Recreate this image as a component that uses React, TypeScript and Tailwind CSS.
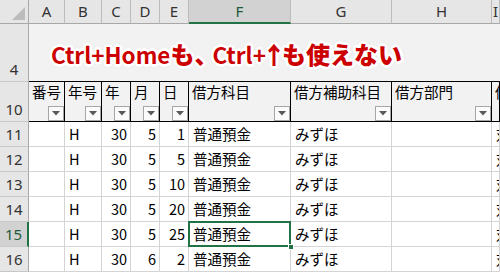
import React from "react";

const font = "font-['Noto_Sans_CJK_JP','Noto_Sans',sans-serif]";

function Dropdown() {
  return (
    <div className="self-end w-[16px] h-[15px] border border-[#a6a6a6] bg-[#fbfbfb] flex items-center justify-center">
      <svg width="8" height="5" viewBox="0 0 8 5">
        <path d="M0 0 L8 0 L4 4.5 Z" fill="#595959" />
      </svg>
    </div>
  );
}

const colLetters = ["A", "B", "C", "D", "E", "F", "G", "H", "I"];
const headers = ["番号", "年号", "年", "月", "日", "借方科目", "借方補助科目", "借方部門", "借方税区分"];
const rows: { n: number; d: string[] }[] = [
  { n: 11, d: ["", "H", "30", "5", "1", "普通預金", "みずほ", "", "対象外"] },
  { n: 12, d: ["", "H", "30", "5", "5", "普通預金", "みずほ", "", "対象外"] },
  { n: 13, d: ["", "H", "30", "5", "10", "普通預金", "みずほ", "", "対象外"] },
  { n: 14, d: ["", "H", "30", "5", "20", "普通預金", "みずほ", "", "対象外"] },
  { n: 15, d: ["", "H", "30", "5", "25", "普通預金", "みずほ", "", "対象外"] },
  { n: 16, d: ["", "H", "30", "6", "2", "普通預金", "みずほ", "", "対象外"] },
];
const rightAligned = [false, false, true, true, true, false, false, false, false];

export default function App() {
  return (
    <div className={`w-[500px] h-[273px] overflow-hidden bg-white text-black ${font}`}>
      <div className="grid grid-cols-[29px_36px_37px_29px_29px_29px_102px_101px_100px_1fr] grid-rows-[24px_58px_40px_25px_25px_25px_25px_25px_25px]">
        {/* corner */}
        <div className="bg-[#e6e6e6] border-r border-b border-[#a8a8a8] flex items-end justify-end p-[3px]">
          <svg width="13" height="13" viewBox="0 0 13 13">
            <path d="M13 0 L13 13 L0 13 Z" fill="#bcbcbc" />
          </svg>
        </div>
        {colLetters.map((c) =>
          c === "F" ? (
            <div
              key={c}
              className="bg-[#d2d2d2] border-r border-[#bcbcbc] border-b-2 border-b-[#217346] flex items-center justify-center text-[15px] text-[#1e5b3a] font-['Noto_Sans',sans-serif]"
            >
              {c}
            </div>
          ) : (
            <div
              key={c}
              className="bg-[#e6e6e6] border-r border-[#bcbcbc] border-b border-b-[#a8a8a8] flex items-center justify-center text-[15px] text-[#333] font-['Noto_Sans',sans-serif] leading-none"
            >
              {c}
            </div>
          )
        )}

        {/* row 4 */}
        <div className="bg-[#e6e6e6] border-r border-r-[#a8a8a8] border-b border-[#c8c8c8] flex items-end justify-center pb-[4px] text-[15px] text-[#333] font-['Noto_Sans',sans-serif] leading-none">
          4
        </div>
        <div className="col-span-9 bg-[#f2f2f2] border-b border-black flex items-center pl-[22px] pt-[2px]">
          <span className="text-[24px] font-black text-[#cc0000] leading-none whitespace-nowrap [text-shadow:2px_0_0_#fff,-2px_0_0_#fff,0_2px_0_#fff,0_-2px_0_#fff,2px_2px_0_#fff,-2px_-2px_0_#fff,2px_-2px_0_#fff,-2px_2px_0_#fff,3px_0_0_#fff,-3px_0_0_#fff,0_3px_0_#fff,0_-3px_0_#fff,0_0_4px_#bbb]">
            <span className="text-[22.5px] font-bold">Ctrl+Home</span>も<span className="tracking-[-6px]">、</span><span className="text-[22.5px] font-bold">Ctrl<span className="tracking-[-4px]">+</span></span><span className="tracking-[-4px]">↑</span>も使えない
          </span>
        </div>

        {/* row 10 */}
        <div className="bg-[#e6e6e6] border-r border-r-[#a8a8a8] border-b border-[#c8c8c8] flex items-end justify-center pb-[4px] text-[15px] text-[#333] font-['Noto_Sans',sans-serif] leading-none">
          10
        </div>
        {headers.map((h, i) => (
          <div
            key={h}
            className="bg-[#f2f2f2] border-r border-b border-black flex flex-col justify-between pl-[3px] pt-[1px] overflow-hidden whitespace-nowrap"
          >
            <span className="text-[14.5px] leading-[18px]">{h}</span>
            {i < 8 ? <Dropdown /> : <span />}
          </div>
        ))}

        {/* data rows */}
        {rows.map((r) => (
          <React.Fragment key={r.n}>
            {r.n === 15 ? (
              <div className="bg-[#d2d2d2] border-r-2 border-r-[#217346] border-b border-[#c8c8c8] flex items-center justify-center text-[15px] text-[#1e5b3a] font-['Noto_Sans',sans-serif] leading-none">
                {r.n}
              </div>
            ) : (
              <div className="bg-[#e6e6e6] border-r border-r-[#a8a8a8] border-b border-[#c8c8c8] flex items-center justify-center text-[15px] text-[#333] font-['Noto_Sans',sans-serif] leading-none">
                {r.n}
              </div>
            )}
            {r.d.map((v, i) => {
              const selected = r.n === 15 && i === 5;
              return (
                <div
                  key={i}
                  className={`relative border-r border-b border-[#d4d4d4] flex items-center overflow-hidden whitespace-nowrap text-[14.5px] leading-none ${
                    rightAligned[i] ? "justify-end pr-[3px]" : "justify-start pl-[4px]"
                  } ${selected ? "overflow-visible" : ""}`}
                >
                  {v}
                  {selected && (
                    <>
                      <div className="absolute left-[-1px] top-[-1px] right-[-1px] bottom-[-1px] border-2 border-[#217346]" />
                      <div className="absolute right-[-4px] bottom-[-4px] w-[6px] h-[6px] bg-[#217346] border border-white z-10" />
                    </>
                  )}
                </div>
              );
            })}
          </React.Fragment>
        ))}
      </div>
    </div>
  );
}
